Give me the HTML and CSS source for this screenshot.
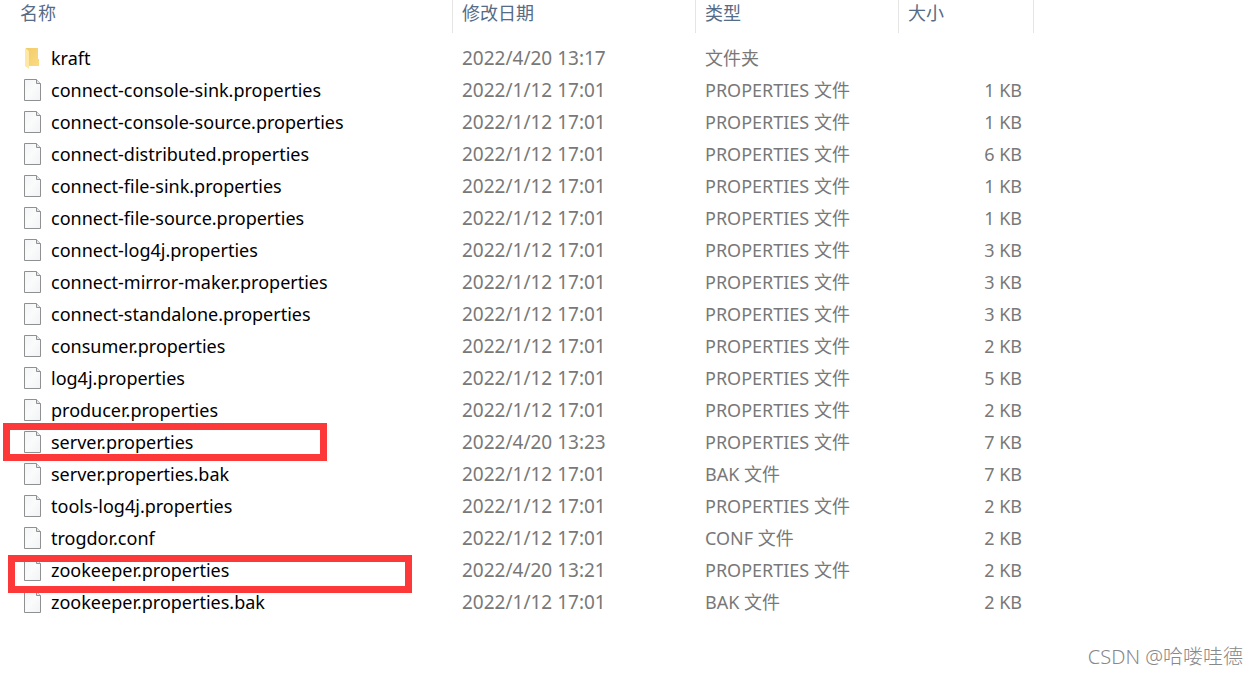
FILE: index.html
```html
<!DOCTYPE html>
<html lang="zh-CN">
<head>
<meta charset="utf-8">
<title>config</title>
<link rel="stylesheet" href="styles.css">
</head>
<body>
<svg class="defs" aria-hidden="true">
  <defs>
    <linearGradient id="paper" x1="0" y1="0" x2="1" y2="1"><stop offset="0" stop-color="#f4f5f6"/><stop offset=".5" stop-color="#fafbfb"/><stop offset="1" stop-color="#f0f2f4"/></linearGradient>
    <linearGradient id="back" x1="0" y1="0" x2="1" y2="1"><stop offset="0" stop-color="#f1cb68"/><stop offset="1" stop-color="#fbdb82"/></linearGradient>
  </defs>
  <symbol id="file" viewBox="0 0 17 22">
    <path d="M.5.5h12l4 4v17H.5z" fill="url(#paper)" stroke="#8e9092"/>
    <path d="M12.500.5v4h4" fill="#e8e9ea" stroke="#8e9092"/>
  </symbol>
  <symbol id="folder" viewBox="0 0 17 22">
    <path d="M2 1h12v11h1v7H5z" fill="url(#back)"/>
    <path d="M1 1l4 3v18l-4-3z" fill="#ffe8a4"/>
  </symbol>
</svg>
<main class="explorer">
<table class="files">
  <colgroup><col class="c-name"><col class="c-date"><col class="c-type"><col class="c-size"><col></colgroup>
  <thead><tr><th scope="col">名称</th><th scope="col">修改日期</th><th scope="col">类型</th><th scope="col">大小</th><td></td></tr></thead>
  <tbody>
  <tr><td class="name"><svg class="icon"><use href="#folder"/></svg><span>kraft</span></td><td class="date">2022/4/20 13:17</td><td>文件夹</td><td class="size"></td></tr>
  <tr><td class="name"><svg class="icon"><use href="#file"/></svg><span>connect-console-sink.properties</span></td><td class="date">2022/1/12 17:01</td><td>PROPERTIES 文件</td><td class="size">1 KB</td></tr>
  <tr><td class="name"><svg class="icon"><use href="#file"/></svg><span>connect-console-source.properties</span></td><td class="date">2022/1/12 17:01</td><td>PROPERTIES 文件</td><td class="size">1 KB</td></tr>
  <tr><td class="name"><svg class="icon"><use href="#file"/></svg><span>connect-distributed.properties</span></td><td class="date">2022/1/12 17:01</td><td>PROPERTIES 文件</td><td class="size">6 KB</td></tr>
  <tr><td class="name"><svg class="icon"><use href="#file"/></svg><span>connect-file-sink.properties</span></td><td class="date">2022/1/12 17:01</td><td>PROPERTIES 文件</td><td class="size">1 KB</td></tr>
  <tr><td class="name"><svg class="icon"><use href="#file"/></svg><span>connect-file-source.properties</span></td><td class="date">2022/1/12 17:01</td><td>PROPERTIES 文件</td><td class="size">1 KB</td></tr>
  <tr><td class="name"><svg class="icon"><use href="#file"/></svg><span>connect-log4j.properties</span></td><td class="date">2022/1/12 17:01</td><td>PROPERTIES 文件</td><td class="size">3 KB</td></tr>
  <tr><td class="name"><svg class="icon"><use href="#file"/></svg><span>connect-mirror-maker.properties</span></td><td class="date">2022/1/12 17:01</td><td>PROPERTIES 文件</td><td class="size">3 KB</td></tr>
  <tr><td class="name"><svg class="icon"><use href="#file"/></svg><span>connect-standalone.properties</span></td><td class="date">2022/1/12 17:01</td><td>PROPERTIES 文件</td><td class="size">3 KB</td></tr>
  <tr><td class="name"><svg class="icon"><use href="#file"/></svg><span>consumer.properties</span></td><td class="date">2022/1/12 17:01</td><td>PROPERTIES 文件</td><td class="size">2 KB</td></tr>
  <tr><td class="name"><svg class="icon"><use href="#file"/></svg><span>log4j.properties</span></td><td class="date">2022/1/12 17:01</td><td>PROPERTIES 文件</td><td class="size">5 KB</td></tr>
  <tr><td class="name"><svg class="icon"><use href="#file"/></svg><span>producer.properties</span></td><td class="date">2022/1/12 17:01</td><td>PROPERTIES 文件</td><td class="size">2 KB</td></tr>
  <tr><td class="name"><svg class="icon"><use href="#file"/></svg><i class="mark mark-server"></i><span>server.properties</span></td><td class="date">2022/4/20 13:23</td><td>PROPERTIES 文件</td><td class="size">7 KB</td></tr>
  <tr><td class="name"><svg class="icon"><use href="#file"/></svg><span>server.properties.bak</span></td><td class="date">2022/1/12 17:01</td><td>BAK 文件</td><td class="size">7 KB</td></tr>
  <tr><td class="name"><svg class="icon"><use href="#file"/></svg><span>tools-log4j.properties</span></td><td class="date">2022/1/12 17:01</td><td>PROPERTIES 文件</td><td class="size">2 KB</td></tr>
  <tr><td class="name"><svg class="icon"><use href="#file"/></svg><span>trogdor.conf</span></td><td class="date">2022/1/12 17:01</td><td>CONF 文件</td><td class="size">2 KB</td></tr>
  <tr><td class="name"><svg class="icon"><use href="#file"/></svg><i class="mark mark-zookeeper"></i><span>zookeeper.properties</span></td><td class="date">2022/4/20 13:21</td><td>PROPERTIES 文件</td><td class="size">2 KB</td></tr>
  <tr><td class="name"><svg class="icon"><use href="#file"/></svg><span>zookeeper.properties.bak</span></td><td class="date">2022/1/12 17:01</td><td>BAK 文件</td><td class="size">2 KB</td></tr>
  </tbody>
</table>
<footer class="watermark">CSDN @哈喽哇德</footer>
</main>
</body>
</html>
```
FILE: styles.css
```css
* { box-sizing: border-box; }
body {
  margin: 0;
  background: #fff;
  color: #787878;
  font: 18px/32px "Noto Sans", "Noto Sans CJK SC", sans-serif;
}
.defs { position: absolute; width: 0; height: 0; }
.explorer { display: flex; flex-direction: column; min-height: 100vh; }
.files { width: 100%; table-layout: fixed; border-collapse: separate; border-spacing: 0; }
.c-name { width: 453px; }
.c-date { width: 243px; }
.c-type { width: 203px; }
.c-size { width: 135px; }
.files th {
  height: 33px;
  padding: 0 9px 6px;
  border-right: 1px solid #e5e5e5;
  color: #566b86;
  font-weight: 400;
  line-height: 27px;
  text-align: left;
}
.files th:first-child { padding-left: 20px; }
.files tbody::before { content: ""; display: block; height: 9px; }
.files td { height: 32px; padding: 0 9px; white-space: nowrap; }
.files thead td { height: 33px; }
.files .name {
  display: flex;
  align-items: center;
  gap: 10px;
  position: relative;
  padding-left: 24px;
  color: #000;
}
.files .date { font-size: 19px; }
.files .size { padding-right: 12px; text-align: right; }
.name span { position: relative; z-index: 2; }
.icon { flex: none; width: 17px; height: 22px; }
.mark { position: absolute; z-index: 1; height: 38px; border: 7px solid #fc3838; }
.mark-server { top: -3px; left: 3px; width: 324px; }
.mark-zookeeper { top: 1px; left: 8px; width: 404px; }
.watermark {
  margin-top: auto;
  padding: 0 14px 4px;
  color: #888;
  font-size: 20px;
  font-weight: 300;
  text-align: right;
}
```
